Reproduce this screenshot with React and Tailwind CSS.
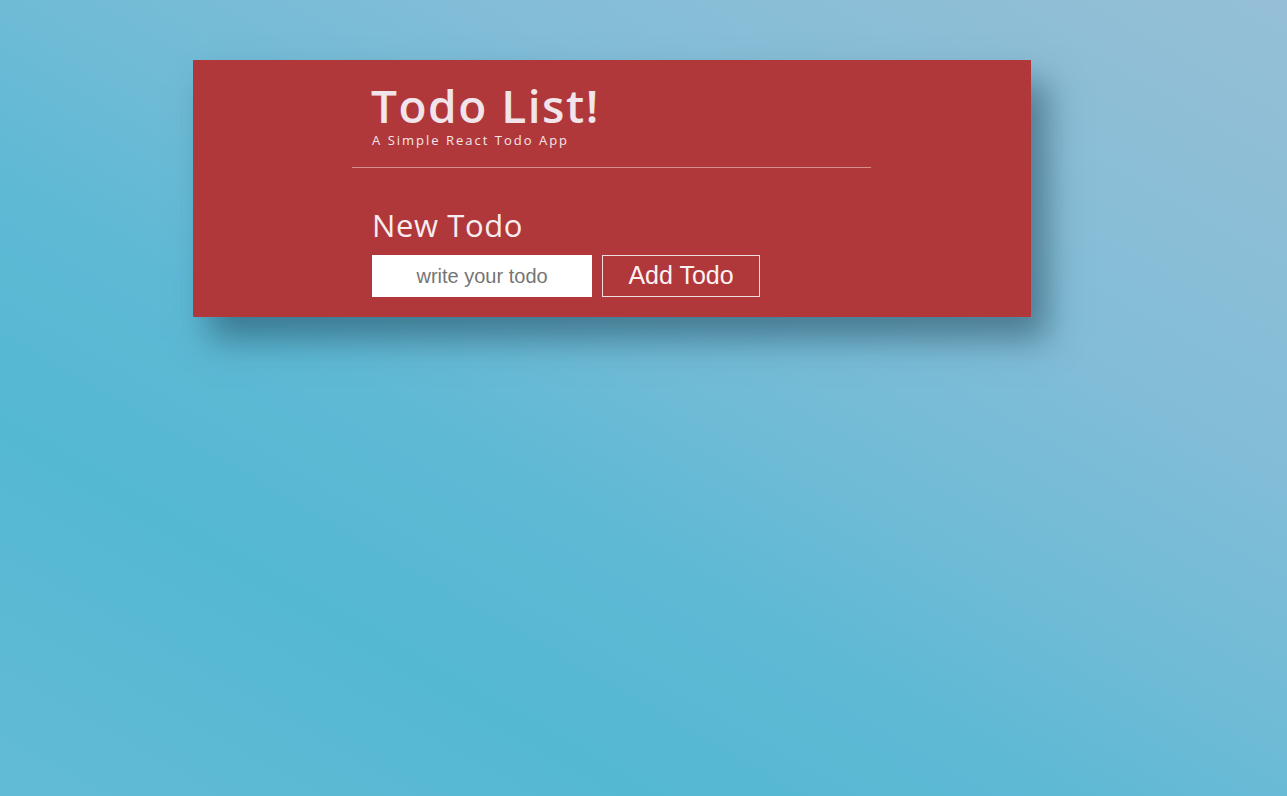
import React, { useState } from "react";

const App = () => {
  const [todo, setTodo] = useState("");

  return (
    <div className="min-h-[796px] w-full pt-[60px] bg-[linear-gradient(30deg,#62bbd6_0%,#55b8d3_24%,#5eb9d5_40%,#6fbbd6_52%,#83bdd7_70%,#95bfd6_100%)]">
      <div className="ml-[15%] w-[838px] bg-[#b0383a] shadow-[16px_22px_32px_rgba(30,70,90,0.55)] pb-5">
        <div className="ml-[159px] w-[519px]">
          <div className="pl-[19px] pt-[22px] pb-[19px] border-b border-[#d98e8e]">
            <h1 className="font-['Open_Sans',sans-serif] font-semibold text-[46px] leading-[46px] text-[#f1e4ea] tracking-[1.5px]">
              Todo List!
            </h1>
            <p className="mt-1 font-['Open_Sans',sans-serif] text-[13px] leading-[16px] tracking-[2px] text-[#f5e6ec] ml-px">
              A Simple React Todo App
            </p>
          </div>
          <div className="pl-5 pt-[39px]">
            <h2 className="font-['Open_Sans',sans-serif] text-[31px] leading-[36px] tracking-[0.6px] text-[#f8ecef]">
              New Todo
            </h2>
            <div className="flex gap-[10px] mt-3">
              <input
                value={todo}
                onChange={(e) => setTodo(e.target.value)}
                placeholder="write your todo"
                className="w-[220px] h-[42px] bg-white text-center font-['Liberation_Sans',Arial,sans-serif] text-[20px] text-[#444] placeholder:text-[#757575] outline-none"
              />
              <button className="w-[158px] h-[42px] border border-[#f1dede] text-[#fbf2f4] font-['Liberation_Sans',Arial,sans-serif] text-[25px]">
                Add Todo
              </button>
            </div>
          </div>
        </div>
      </div>
    </div>
  );
};

export default App;
